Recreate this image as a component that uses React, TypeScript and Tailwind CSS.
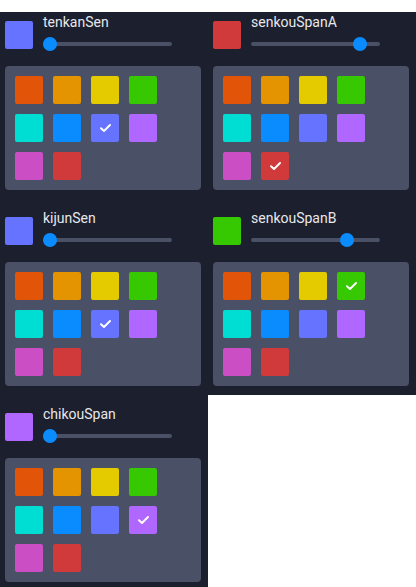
import React from "react";

const COLORS = [
  "#e25407",
  "#e39400",
  "#e3cb00",
  "#36c800",
  "#00ded4",
  "#0a8cff",
  "#6673ff",
  "#b067ff",
  "#cc4ec5",
  "#d13a3a",
];

type Item = { name: string; color: number; thumb: number; short?: boolean };

const ITEMS: Item[] = [
  { name: "tenkanSen", color: 6, thumb: 0 },
  { name: "senkouSpanA", color: 9, thumb: 102 },
  { name: "kijunSen", color: 6, thumb: 0 },
  { name: "senkouSpanB", color: 3, thumb: 89, short: true },
  { name: "chikouSpan", color: 7, thumb: 0 },
];

function Check() {
  return (
    <svg width="11" height="8" viewBox="0 0 11 8" fill="none">
      <path d="M1 4.2 L4 7 L10 1" stroke="white" strokeWidth="1.9" strokeLinecap="round" strokeLinejoin="round" />
    </svg>
  );
}

function Cell({ item }: { item: Item }) {
  return (
    <div
      className={
        "bg-[#1c1f2e] pl-[5px] pr-[7px] " + (item.short ? "pb-[9px]" : "pb-[18px]")
      }
    >
      <div className="flex items-center gap-[10px] h-[46px]">
        <div
          className="w-[28px] h-[28px] rounded-[2px] shrink-0"
          style={{ backgroundColor: COLORS[item.color] }}
        />
        <div className="flex flex-col w-[129px]">
          <span className="text-[14px] leading-[20px] text-[#e8e8ea]">{item.name}</span>
          <div className="relative h-[26px]">
            <div className="h-[4px] mt-[10px] rounded-full bg-[#4a5066]" />
            <div
              className="absolute top-[5px] w-[14px] h-[14px] rounded-full bg-[#0a8cff]"
              style={{ left: item.thumb }}
            />
          </div>
        </div>
      </div>
      <div className="mt-[8px] w-[196px] bg-[#4a5066] rounded-[4px] p-[10px] grid grid-cols-[repeat(4,28px)] gap-[10px]">
        {COLORS.map((c, i) => (
          <div
            key={i}
            className="w-[28px] h-[28px] rounded-[2px] flex items-center justify-center"
            style={{ backgroundColor: c }}
          >
            {i === item.color ? <Check /> : null}
          </div>
        ))}
      </div>
    </div>
  );
}

export default function App() {
  return (
    <div className="bg-white pt-[12px] w-[416px] h-[587px] overflow-hidden" style={{ fontFamily: "Roboto, 'Liberation Sans', sans-serif" }}>
      <div className="grid grid-cols-[208px_208px] items-start">
        {ITEMS.map((it) => (
          <Cell key={it.name} item={it} />
        ))}
      </div>
    </div>
  );
}
